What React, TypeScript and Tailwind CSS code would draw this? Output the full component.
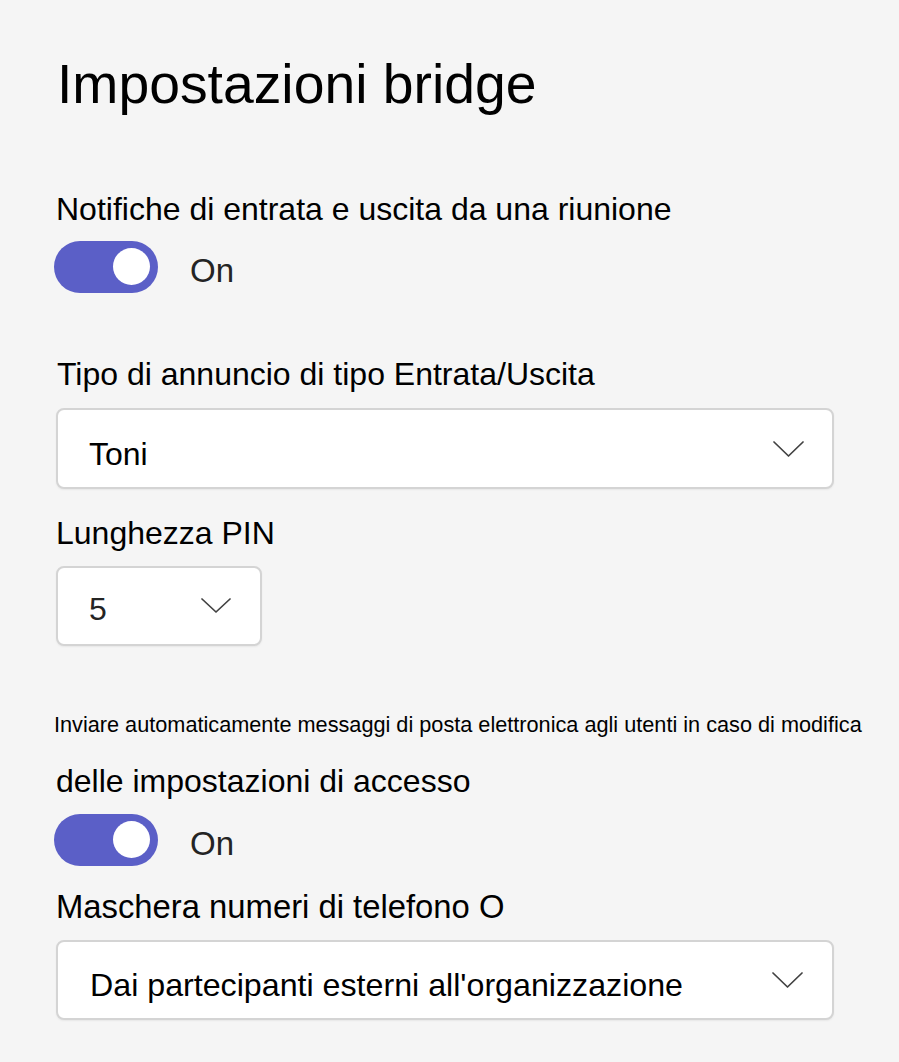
import React from "react";

function Chevron({ w = 31, h = 16 }: { w?: number; h?: number }) {
  return (
    <svg width={w} height={h} viewBox={`0 0 ${w} ${h}`} fill="none">
      <polyline
        points={`1,1 ${w / 2},${h - 1} ${w - 1},1`}
        stroke="#424242"
        strokeWidth="1.7"
        strokeLinecap="round"
        strokeLinejoin="round"
      />
    </svg>
  );
}

function Toggle() {
  return (
    <div className="flex items-start ml-[-2px]">
      <div className="w-[104px] h-[52px] rounded-full bg-[#5b5fc7] flex items-center justify-end pr-[8px]">
        <div className="w-[37px] h-[37px] rounded-full bg-white" />
      </div>
      <span className="ml-[32px] mt-[13px] text-[33px] leading-[33px] text-[#242424]">On</span>
    </div>
  );
}

export default function App() {
  return (
    <div
      className="w-full min-h-[1062px] bg-[#f5f5f5] pl-[56px] pt-[57px] text-black"
      style={{ fontFamily: '"Liberation Sans", Arial, sans-serif' }}
    >
      <h1 className="text-[55.3px] leading-[55px] font-normal ml-[1px]">Impostazioni bridge</h1>

      <div className="mt-[82px] text-[32px] leading-[31.5px]">
        Notifiche di entrata e uscita da una riunione
      </div>
      <div className="mt-[15px]">
        <Toggle />
      </div>

      <div className="mt-[65px] text-[32px] leading-[32px] ml-[1px]">
        Tipo di annuncio di tipo Entrata/Uscita
      </div>
      <div className="mt-[18px] w-[778px] h-[81px] bg-white border-2 border-[#d4d4d4] rounded-[8px] flex justify-between items-start pl-[31px] pr-[28px] shadow-[0_1px_2px_rgba(0,0,0,0.06)]">
        <span className="mt-[28px] text-[32px] leading-[32px]">Toni</span>
        <span className="mt-[31px] flex">
          <Chevron />
        </span>
      </div>

      <div className="mt-[28px] text-[32px] leading-[32px]">Lunghezza PIN</div>
      <div className="mt-[17px] w-[206px] h-[80px] bg-white border-2 border-[#d4d4d4] rounded-[8px] flex justify-between items-start pl-[31px] pr-[29px] shadow-[0_1px_2px_rgba(0,0,0,0.06)]">
        <span className="mt-[25px] text-[32px] leading-[32px] text-[#242424]">5</span>
        <span className="mt-[30px] flex">
          <Chevron w={30} h={15} />
        </span>
      </div>

      <div className="mt-[68px] text-[21.7px] leading-[21.5px] ml-[-2px] whitespace-nowrap">
        Inviare automaticamente messaggi di posta elettronica agli utenti in caso di modifica
      </div>
      <div className="mt-[29.5px] text-[32px] leading-[32px]">delle impostazioni di accesso</div>
      <div className="mt-[17px]">
        <Toggle />
      </div>

      <div className="mt-[24px] text-[32.8px] leading-[33px]">Maschera numeri di telefono O</div>
      <div className="mt-[17px] w-[778px] h-[80px] bg-white border-2 border-[#d4d4d4] rounded-[8px] flex justify-between items-start pl-[32px] pr-[29px] shadow-[0_1px_2px_rgba(0,0,0,0.06)]">
        <span className="mt-[27px] text-[32.2px] leading-[32px]">Dai partecipanti esterni all'organizzazione</span>
        <span className="mt-[30px] flex">
          <Chevron />
        </span>
      </div>
    </div>
  );
}
